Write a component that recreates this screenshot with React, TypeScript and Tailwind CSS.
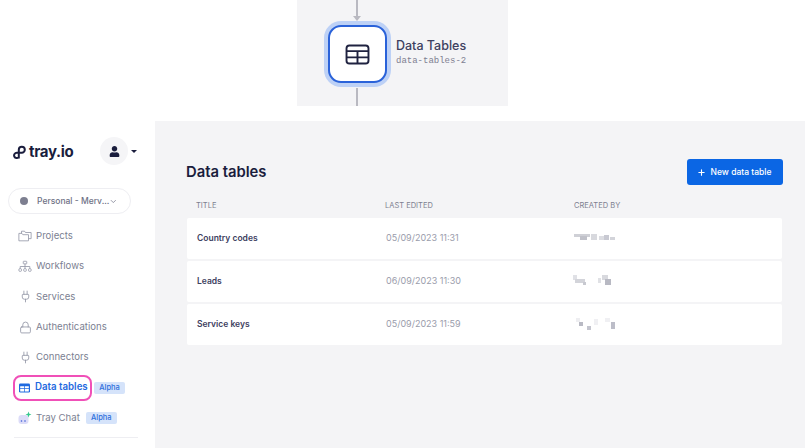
import { ChevronDown, Lock, Plug, Plus } from 'lucide-react';
import { FaUser } from 'react-icons/fa';

const font = { fontFamily: 'Inter, "Noto Sans", sans-serif' };

function TableIcon({ className }: { className?: string }) {
  return (
    <svg viewBox="0 0 26 22" fill="none" stroke="currentColor" strokeWidth="2" className={className}>
      <rect x="1.500" y="1.500" width="23" height="19" rx="3" />
      <path d="M1.500 7.500h23M1.500 14h23M13 7.500v13" />
    </svg>
  );
}

function TableIconSolid() {
  return (
    <svg viewBox="0 0 12 10" className="w-[11px] h-[10px] ml-[1px] shrink-0">
      <rect width="12" height="10" rx="1.500" fill="#1f6ae0" />
      <path d="M1.300 3.200h4.300v2.200H1.300zM6.400 3.200h4.300v2.200H6.400zM1.300 6.200h4.300v2.500H1.300zM6.400 6.200h4.300v2.500H6.400z" fill="#fff" />
    </svg>
  );
}

function Logo() {
  return (
    <svg viewBox="0 0 14 14" fill="none" stroke="#1a1d3d" strokeWidth="2" className="w-[14px] h-[15px] shrink-0">
      <path d="M5.800 13V4.200a3 3 0 1 1 3 3H3.800a2.700 2.700 0 1 0 2 4.500" />
    </svg>
  );
}

function FlowIcon() {
  return (
    <svg viewBox="0 0 16 14" fill="none" stroke="#8f92a3" strokeWidth="0.9" className="w-[14px] h-[13px]">
      <rect x="6" y="1" width="4" height="3" rx="0.6" />
      <rect x="1" y="9.500" width="3" height="3" rx="1" />
      <rect x="6.500" y="9.500" width="3" height="3" rx="1" />
      <rect x="12" y="9.500" width="3" height="3" rx="1" />
      <path d="M8 4v5.500M2.500 9.500V7h11v2.500" />
    </svg>
  );
}

function ProjectsIcon() {
  return (
    <svg viewBox="0 0 16 13" fill="none" stroke="#8f92a3" strokeWidth="0.9" className="w-[14px] h-[12px]">
      <path d="M4 3.500V1h3.500l1 1.500H15v7h-3" />
      <path d="M1 3.500h3.500l1 1.500H12v7H1z" />
    </svg>
  );
}

function ChatIcon() {
  return (
    <svg viewBox="0 0 14 14" className="w-[14px] h-[14px]">
      <rect x="0.500" y="4" width="10" height="9" rx="3" fill="#dcdcf8" />
      <circle cx="3.500" cy="10" r="0.800" fill="#3b5bd6" />
      <circle cx="7" cy="10" r="0.800" fill="#3b5bd6" />
      <path d="M10.500 0.500l0.800 2.200 2.200 0.800-2.200 0.800-0.800 2.200-0.800-2.200-2.200-0.800 2.200-0.800z" fill="#35c98e" />
    </svg>
  );
}

// redacted names in the created-by column
function Redacted({ cells }: { cells: [number, number, number, number, string][] }) {
  return (
    <svg width="48" height="14" className="block -ml-[2px] blur-[0.6px]">
      {cells.map(([x, y, w, h, fill], i) => (
        <rect key={i} x={x} y={y} width={w} height={h} fill={fill} />
      ))}
    </svg>
  );
}

function Alpha() {
  return (
    <span className="ml-[2px] w-[31px] h-3 shrink-0 text-center rounded-[2px] bg-[#d5e3fa] text-[#2e6fdc] text-[7.500px] leading-3 font-medium">
      Alpha
    </span>
  );
}

function NavItem({ icon, label }: { icon: React.ReactNode; label: string }) {
  return (
    <div className="h-[30.3px] pl-[18px] flex items-center gap-[4px] text-[9.600px] text-[#7c7f92]">
      <span className="w-[14px] flex justify-center">{icon}</span>
      {label}
    </div>
  );
}

const rows = [
  {
    title: 'Country codes',
    date: '05/09/2023 11:31',
    blur: [[1, 3, 16, 3, '#cfd0d6'], [7, 5, 7, 4, '#c0c1c9'], [18, 3, 6, 6, '#d8d9de'], [26, 5, 5, 4, '#dcdde2'], [31, 4, 5, 5, '#c8c9d2'], [37, 6, 5, 3, '#d3d4da']],
  },
  {
    title: 'Leads',
    date: '06/09/2023 11:30',
    blur: [[0, 1, 4, 5, '#e0e1e6'], [2, 5, 10, 4, '#d3d4da'], [10, 8, 3, 3, '#c8c9d0'], [25, 4, 3, 5, '#e0e1e5'], [29, 1, 6, 5, '#d8d9de'], [32, 5, 6, 6, '#b8b9c3']],
  },
  {
    title: 'Service keys',
    date: '05/09/2023 11:59',
    blur: [[3, 1, 4, 4, '#eeeef1'], [6, 5, 4, 4, '#b9bac4'], [14, 9, 4, 4, '#c4c5ce'], [21, 2, 4, 6, '#f0f0f3'], [32, 1, 5, 4, '#f0f0f3'], [38, 5, 4, 7, '#bcbdc8']],
  },
] as { title: string; date: string; blur: [number, number, number, number, string][] }[];

export default function App() {
  return (
    <div style={font} className="w-[805px] h-[448px] overflow-hidden bg-white flex flex-col">
      {/* workflow canvas crop */}
      <div className="h-[121px] shrink-0 flex justify-center items-start">
        <div className="w-[211px] h-[106px] bg-[#f4f4f6] flex pl-[27px]">
          <div className="w-[67px] flex flex-col items-center">
            <div className="h-[21px] pr-[2px] flex flex-col items-center">
              <div className="w-[2px] h-[16px] bg-[#b9b9c1]" />
              <div className="w-0 h-0 border-x-[4px] border-x-transparent border-t-[5px] border-t-[#b9b9c1]" />
            </div>
            <div className="w-[67px] h-[66px] rounded-[17px] bg-[#bdd1f6] p-[4px] shrink-0">
              <div className="w-full h-full rounded-[13px] bg-white border-2 border-[#2a62d9] flex items-center justify-center">
                <TableIcon className="w-[25px] h-[21px] text-[#1f2240]" />
              </div>
            </div>
            <div className="w-[2px] flex-1 mt-[1px] mr-[2px] bg-[#b9b9c1]" />
          </div>
          <div className="ml-[5px] mt-[38px]">
            <div className="text-[12.500px] leading-[16px] font-medium text-[#3d4060]">Data Tables</div>
            <div className="text-[9px] leading-[14px] text-[#7f8092]" style={{ fontFamily: '"Liberation Mono", monospace' }}>
              data-tables-2
            </div>
          </div>
        </div>
      </div>

      <div className="flex-1 flex min-h-0">
        {/* sidebar */}
        <aside className="w-[155px] shrink-0 bg-white flex flex-col">
          <div className="h-[67px] pt-4 pl-[13px] pr-[18px] flex items-start justify-between">
            <div className="flex items-center gap-[2px] h-[30px]">
              <Logo />
              <span className="text-[15px] font-bold text-[#1a1d3d] tracking-[-0.3px]">tray.io</span>
            </div>
            <div className="flex items-center gap-[3px]">
              <div className="w-[28px] h-[28px] rounded-full bg-[#f5f5f7] flex items-center justify-center">
                <FaUser className="w-[11px] h-[11px] text-[#1a1d3d]" />
              </div>
              <div className="w-0 h-0 border-x-[3px] border-x-transparent border-t-[3px] border-t-[#1a1d3d]" />
            </div>
          </div>
          <div className="ml-[8px] w-[123px] h-[26px] rounded-full border border-[#eeeef2] flex items-center pl-[11px] pr-[12px] shrink-0">
            <span className="w-2 h-2 shrink-0 rounded-full bg-[#7d7f90]" />
            <span className="ml-[9px] text-[8.500px] font-medium text-[#6f7286] whitespace-nowrap">Personal - Merv...</span>
            <ChevronDown className="ml-auto w-[9px] h-[9px] text-[#6f7286]" />
          </div>
          <nav className="mt-[7px] flex flex-col">
            <NavItem icon={<ProjectsIcon />} label="Projects" />
            <NavItem icon={<FlowIcon />} label="Workflows" />
            <NavItem icon={<Plug className="w-[13px] h-[13px] text-[#8f92a3]" strokeWidth={1.5} />} label="Services" />
            <NavItem icon={<Lock className="w-[13px] h-[13px] text-[#8f92a3]" strokeWidth={1.5} />} label="Authentications" />
            <NavItem icon={<Plug className="w-[13px] h-[13px] text-[#8f92a3]" strokeWidth={1.5} />} label="Connectors" />
            <div className="h-[30.3px] pl-[13px] flex items-center">
              <div className="h-[26px] w-[79px] pl-[3px] rounded-[8px] border-2 border-[#f050b8] flex items-center gap-[5px] text-[9.700px] font-semibold text-[#1f6ae0] whitespace-nowrap">
                <TableIconSolid />
                Data tables
              </div>
              <Alpha />
            </div>
            <div className="h-[30.3px] pl-[18px] flex items-center gap-[4px] text-[9.600px] text-[#7c7f92]">
              <ChatIcon />
              <span>Tray Chat</span>
              <Alpha />
            </div>
          </nav>
          <div className="mt-[4px] ml-[14px] w-[124px] h-px bg-[#eeeef2]" />
        </aside>

        {/* main */}
        <main className="flex-1 bg-[#f4f4f6] pl-[31px] pr-[22px] pt-[38px]">
          <div className="flex items-center justify-between h-[26px]">
            <h1 className="text-[14.800px] font-semibold text-[#1a1d3d]">Data tables</h1>
            <button className="w-[96px] h-[26px] pr-[2px] rounded-[3px] bg-[#0b66e4] text-white text-[8.500px] font-medium flex items-center justify-center gap-[5px]">
              <Plus className="w-[9px] h-[9px]" strokeWidth={3} />
              New data table
            </button>
          </div>
          <div className="mt-[10px] pl-[10px] h-[21px] grid grid-cols-[189px_189px_1fr] text-[7.500px] text-[#7d7f90] uppercase items-center">
            <span>Title</span>
            <span>Last edited</span>
            <span>Created by</span>
          </div>
          <div className="mt-[2px] ml-[1px] mr-[1px] flex flex-col gap-[2px]">
            {rows.map((row) => (
              <div key={row.title} className="h-[41px] bg-white rounded-[2px] pl-[10px] pb-[1px] grid grid-cols-[189px_189px_1fr] items-center">
                <span className="text-[8.500px] font-semibold text-[#3d4060]">{row.title}</span>
                <span className="text-[9px] text-[#9a9cab]">{row.date}</span>
                <Redacted cells={row.blur} />
              </div>
            ))}
          </div>
        </main>
      </div>
    </div>
  );
}
